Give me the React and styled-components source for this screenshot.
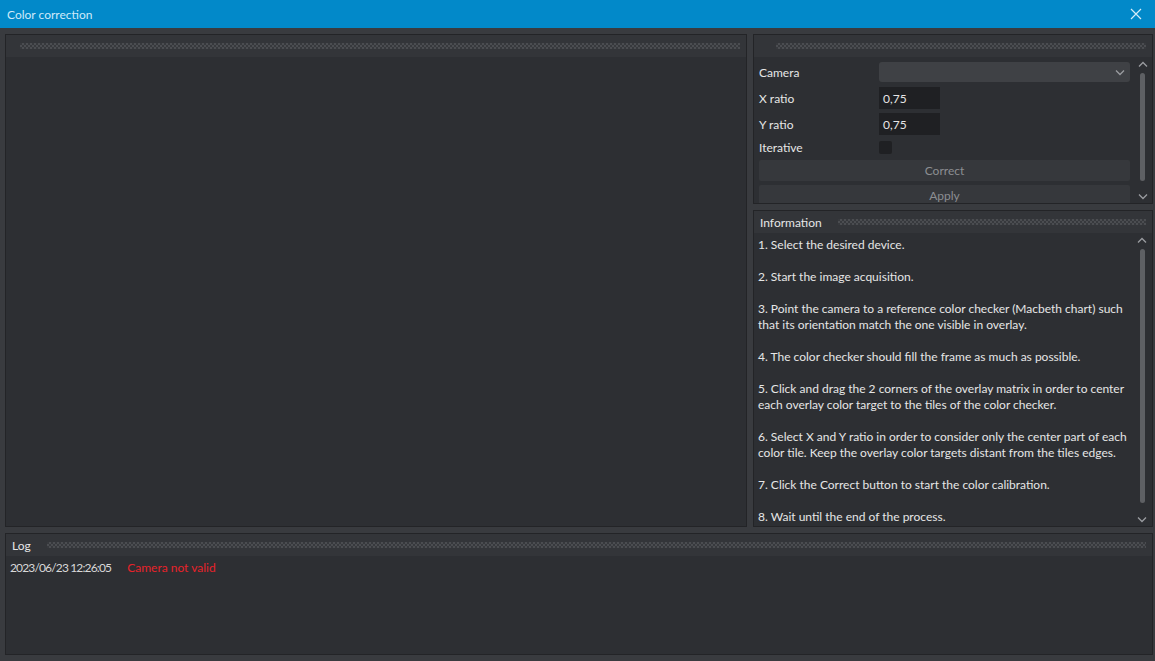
import React from 'react'
import styled, { createGlobalStyle } from 'styled-components'

const GlobalStyle = createGlobalStyle`
  html, body {
    margin: 0;
    padding: 0;
    background: #393b3f;
    font-family: "Lato", "Open Sans", sans-serif;
    overflow: hidden;
  }
`

const steps = [
  '1. Select the desired device.',
  '2. Start the image acquisition.',
  '3. Point the camera to a reference color checker (Macbeth chart) such that its orientation match the one visible in overlay.',
  '4. The color checker should fill the frame as much as possible.',
  '5. Click and drag the 2 corners of the overlay matrix in order to center each overlay color target to the tiles of the color checker.',
  '6. Select X and Y ratio in order to consider only the center part of each color tile. Keep the overlay color targets distant from the tiles edges.',
  '7. Click the Correct button to start the color calibration.',
  '8. Wait until the end of the process.',
]

function ChevronUp() {
  return (
    <svg width="10" height="7" viewBox="0 0 10 7">
      <path d="M1 5.5 L5 1.5 L9 5.5" fill="none" stroke="#9a9ca0" strokeWidth="1.3" />
    </svg>
  )
}

function ChevronDown() {
  return (
    <svg width="10" height="7" viewBox="0 0 10 7">
      <path d="M1 1.5 L5 5.5 L9 1.5" fill="none" stroke="#9a9ca0" strokeWidth="1.3" />
    </svg>
  )
}

function ScrollBar({ thumbTop, thumbHeight }) {
  return (
    <Scroll>
      <ChevronUp />
      <Track>
        <Thumb style={{ marginTop: thumbTop, height: thumbHeight }} />
      </Track>
      <ChevronDown />
    </Scroll>
  )
}

function App() {
  return (
    <Window>
      <GlobalStyle />
      <TitleBar>
        <span>Color correction</span>
        <svg width="12" height="12" viewBox="0 0 12 12">
          <path d="M1 1 L11 11 M11 1 L1 11" stroke="#d6ecf8" strokeWidth="1.2" />
        </svg>
      </TitleBar>
      <Body>
        <Panel>
          <Header>
            <Grip />
          </Header>
        </Panel>
        <RightColumn>
          <Panel>
            <Header $right>
              <Grip />
            </Header>
            <SettingsArea>
              <Form>
                <Row>
                  <Label>Camera</Label>
                  <Combo>
                    <ChevronDown />
                  </Combo>
                </Row>
                <Row>
                  <Label>X ratio</Label>
                  <NumberBox>0,75</NumberBox>
                </Row>
                <Row>
                  <Label>Y ratio</Label>
                  <NumberBox>0,75</NumberBox>
                </Row>
                <Row $short>
                  <Label>Iterative</Label>
                  <Check />
                </Row>
                <Button>Correct</Button>
                <Button>Apply</Button>
              </Form>
              <ScrollBar thumbTop={2} thumbHeight={108} />
            </SettingsArea>
          </Panel>
          <Panel>
            <Header>
              <Title>Information</Title>
              <Grip />
            </Header>
            <InfoArea>
              <InfoText>
                {steps.map((s, i) => (
                  <p key={i}>{s}</p>
                ))}
              </InfoText>
              <ScrollBar thumbTop={2} thumbHeight={254} />
            </InfoArea>
          </Panel>
        </RightColumn>
        <LogPanel>
          <Header>
            <Title>Log</Title>
            <Grip />
          </Header>
          <LogBody>
            <LogLine>
              <span>2023/06/23 12:26:05</span>
              <Error>Camera not valid</Error>
            </LogLine>
          </LogBody>
        </LogPanel>
      </Body>
    </Window>
  )
}

export default App

const Window = styled.div`
  width: 1155px;
  height: 661px;
  display: flex;
  flex-direction: column;
  background: #393b3f;
`

const TitleBar = styled.div`
  height: 28px;
  background: #0289c9;
  display: flex;
  align-items: center;
  justify-content: space-between;
  padding: 0 13px 0 7px;
  box-sizing: border-box;
  flex-shrink: 0;

  span {
    color: #cfeaf9;
    font-size: 12px;
    font-family: "Lato", sans-serif;
  }
`

const Body = styled.div`
  flex: 1;
  display: grid;
  grid-template-columns: 742px 400px;
  grid-template-rows: 493px 122px;
  column-gap: 6px;
  row-gap: 6px;
  padding: 6px 2px 6px 5px;
`

const Panel = styled.div`
  background: #2d2f33;
  border: 1px solid #232427;
  display: flex;
  flex-direction: column;
  min-height: 0;
  overflow: hidden;
`

const RightColumn = styled.div`
  display: grid;
  grid-template-rows: 170px 317px;
  row-gap: 6px;
  min-height: 0;
`

const LogPanel = styled(Panel)`
  grid-column: 1 / span 2;
`

const Header = styled.div`
  height: 22px;
  flex-shrink: 0;
  background: #333539;
  display: flex;
  align-items: center;
  gap: 8px;
  padding: 0 6px 0 ${({ $right }) => ($right ? '14px' : '6px')};
`

const Title = styled.span`
  color: #e6e6e6;
  font-size: 12px;
  white-space: nowrap;
`

const Grip = styled.div`
  flex: 1;
  height: 6px;
  margin-left: 8px;
  background-color: #37393d;
  background-image: repeating-conic-gradient(#4b4d51 0 25%, transparent 0 50%);
  background-size: 4px 4px;
`

const SettingsArea = styled.div`
  flex: 1;
  display: flex;
  min-height: 0;
  overflow: hidden;
`

const Form = styled.div`
  flex: 1;
  display: flex;
  flex-direction: column;
  padding: 4px 0 0 5px;
  gap: 4px;
`

const Row = styled.div`
  display: flex;
  align-items: center;
  flex-shrink: 0;
  height: ${({ $short }) => ($short ? '17px' : '22px')};
`

const Label = styled.span`
  width: 120px;
  color: #e6e6e6;
  font-size: 12px;
`

const Combo = styled.div`
  width: 251px;
  height: 20px;
  background: #3f4145;
  border-radius: 3px;
  display: flex;
  align-items: center;
  justify-content: flex-end;
  padding-right: 5px;
  box-sizing: border-box;
`

const NumberBox = styled.div`
  width: 61px;
  height: 22px;
  background: #1f2023;
  box-sizing: border-box;
  padding: 0 4px;
  display: flex;
  align-items: center;
  color: #e6e6e6;
  font-size: 12px;
`

const Check = styled.div`
  width: 13px;
  height: 13px;
  background: #1f2023;
  border-radius: 2px;
`

const Button = styled.div`
  width: 371px;
  height: 21px;
  flex-shrink: 0;
  background: #36383c;
  border-radius: 2px;
  display: flex;
  align-items: center;
  justify-content: center;
  color: #8c8e92;
  font-size: 12px;
`

const Scroll = styled.div`
  width: 14px;
  margin: 0 3px 0 6px;
  display: flex;
  flex-direction: column;
  align-items: center;
  padding: 4px 0 3px;
  gap: 3px;
`

const Track = styled.div`
  flex: 1;
  width: 5px;
  display: flex;
  flex-direction: column;
`

const Thumb = styled.div`
  width: 5px;
  background: #5e6064;
  border-radius: 3px;
`

const InfoArea = styled.div`
  flex: 1;
  display: flex;
  min-height: 0;
  overflow: hidden;
`

const InfoText = styled.div`
  flex: 1;
  padding: 4px 0 0 4px;
  color: #e6e6e6;
  font-size: 12px;
  line-height: 16px;

  p {
    margin: 0 0 16px;
  }
`

const LogBody = styled.div`
  flex: 1;
  padding: 4px 4px;
`

const LogLine = styled.div`
  display: flex;
  gap: 16px;
  color: #d8d8d8;
  font-size: 12px;
  letter-spacing: -0.85px;
  line-height: 16px;
`

const Error = styled.span`
  color: #e8222a;
  letter-spacing: 0;
`
